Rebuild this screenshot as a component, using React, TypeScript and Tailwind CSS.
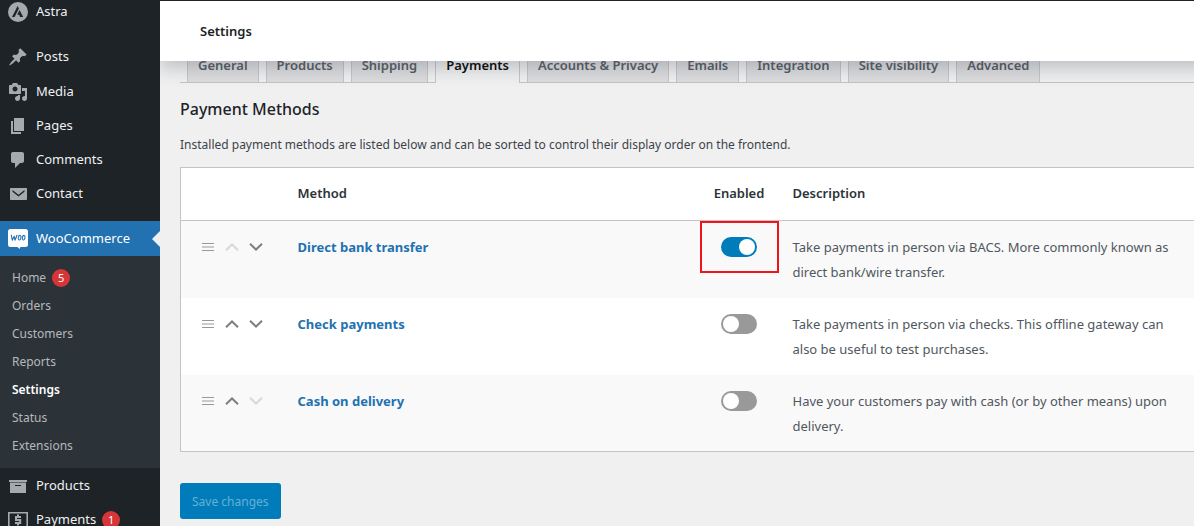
import { useState } from "react";
import type { ReactNode } from "react";

function Glyph({ d }: { d: string }) {
  return (
    <svg viewBox="0 0 20 20" className="size-5 shrink-0 fill-[#a7aaad]" aria-hidden="true">
      <path fillRule="evenodd" d={d} />
    </svg>
  );
}

const POST =
  "M10.44 3.02l1.82-1.82 6.36 6.35-1.83 1.82c-1.05-.68-2.48-.57-3.41.36l-.75.75c-.92.93-1.04 2.35-.35 3.41l-1.83 1.82-2.41-2.41-2.8 2.79c-.42.42-3.38 2.71-3.8 2.29s1.86-3.39 2.28-3.81l2.79-2.79L4.1 9.36l1.83-1.82c1.05.69 2.48.57 3.4-.36l.75-.75c.93-.92 1.05-2.35.36-3.41z";
const MEDIA =
  "M13 11V4c0-.55-.45-1-1-1h-1.67L9 1H5L3.67 3H2c-.55 0-1 .45-1 1v7c0 .55.45 1 1 1h10c.55 0 1-.45 1-1zM7 4.5c1.38 0 2.5 1.12 2.5 2.5S8.38 9.5 7 9.5 4.5 8.38 4.5 7 5.62 4.5 7 4.5zM14 6h5v10.5c0 1.38-1.12 2.5-2.5 2.5S14 17.88 14 16.5s1.12-2.5 2.5-2.5c.17 0 .34.02.5.05V9h-3V6zm-4 8.05V13h2v3.5c0 1.38-1.12 2.5-2.5 2.5S7 17.88 7 16.5 8.12 14 9.5 14c.17 0 .34.02.5.05z";
const PAGE = "M6 15V2h10v13H6zm-1 1h8v2H3V5h2v11z";
const COMMENT = "M5 2h9c1.1 0 2 .9 2 2v7c0 1.1-.9 2-2 2h-2l-5 5v-5H5c-1.1 0-2-.9-2-2V4c0-1.1.9-2 2-2z";
const MAIL =
  "M3 4h15c.6 0 1 .4 1 1v10c0 .6-.4 1-1 1H3c-.6 0-1-.4-1-1V5c0-.6.4-1 1-1zM4.500 6v1.800l6 4.700 6-4.700V6l-6 4.700z";
const ARCHIVE = "M19 4v2H1V4h18zM2 6.500h16V17H2zM7 9v1h6V9z";

function AstraIcon() {
  return (
    <svg viewBox="0 0 20 20" className="size-5 shrink-0" aria-hidden="true">
      <circle cx="10" cy="10" r="10" fill="#a7aaad" />
      <path d="M9.600 4L4 15h2.600l4.300-8.500zM11.500 8l-2.300 4.700h2l.8 2.300h3.200z" fill="#1d2327" />
    </svg>
  );
}

function WooIcon() {
  return (
    <svg viewBox="0 0 20 20" className="size-5 shrink-0" aria-hidden="true">
      <path d="M2.500 0h15A2.500 2.500 0 0 1 20 2.500v13a2.500 2.500 0 0 1-2.500 2.500h-5l-1 2-2-2h-7A2.500 2.500 0 0 1 0 15.500v-13A2.500 2.500 0 0 1 2.500 0z" fill="#fff" />
      <path d="M3.300 6.200l1 5L6.200 7.200l.8 4L9 6.200" fill="none" stroke="#2271b1" strokeWidth="1.100" strokeLinejoin="round" strokeLinecap="round" />
      <ellipse cx="11.600" cy="8.700" rx="1.300" ry="2.300" transform="rotate(14 11.600 8.700)" fill="none" stroke="#2271b1" strokeWidth="1.100" />
      <ellipse cx="15.600" cy="8.700" rx="1.300" ry="2.300" transform="rotate(14 15.600 8.700)" fill="none" stroke="#2271b1" strokeWidth="1.100" />
    </svg>
  );
}

function MoneyIcon() {
  return (
    <svg viewBox="0 0 20 20" className="size-5 shrink-0" fill="none" stroke="#a7aaad" aria-hidden="true">
      <path d="M.8 2.800h18.400v14.400H.8z" strokeWidth="1.600" />
      <path d="M13 7H8v3h4.200v3H7M10 4.500V7M10 13v2.500" strokeWidth="2" />
    </svg>
  );
}

function Badge({ children }: { children: ReactNode }) {
  return (
    <span className="flex size-[18px] items-center justify-center rounded-full bg-[#d63638] text-[11px] text-white">
      {children}
    </span>
  );
}

function MenuItem({ icon, label, badge, tall }: { icon: ReactNode; label: string; badge?: string; tall?: boolean }) {
  return (
    <li>
      <a href="#" className={`flex items-center px-2 text-[13px] text-[#f0f0f1] ${tall ? "h-9" : "h-[34px]"}`}>
        {icon}
        <span className="mr-1.5 ml-2">{label}</span>
        {badge && <Badge>{badge}</Badge>}
      </a>
    </li>
  );
}

const SUBMENU = ["Home", "Orders", "Customers", "Reports", "Settings", "Status", "Extensions"];

function Sidebar() {
  return (
    <nav className="w-40 shrink-0 overflow-hidden bg-[#1d2327]" aria-label="Main menu">
      <ul className="-mt-[5px]">
        <MenuItem icon={<AstraIcon />} label="Astra" />
      </ul>
      <ul className="py-2.5">
        <MenuItem icon={<Glyph d={POST} />} label="Posts" tall />
        <MenuItem icon={<Glyph d={MEDIA} />} label="Media" />
        <MenuItem icon={<Glyph d={PAGE} />} label="Pages" />
        <MenuItem icon={<Glyph d={COMMENT} />} label="Comments" />
        <MenuItem icon={<Glyph d={MAIL} />} label="Contact" />
      </ul>
      <a href="#" className="relative flex h-[35px] items-center gap-2 bg-[#2271b1] px-2 text-[13px] text-white">
        <WooIcon />
        WooCommerce
        <span className="absolute top-1/2 right-0 -translate-y-1/2 border-8 border-l-0 border-transparent border-r-[#f0f0f1]" />
      </a>
      <ul className="bg-[#2c3338] py-2">
        {SUBMENU.map((label) => (
          <li key={label}>
            <a
              href="#"
              className={`flex h-7 items-center gap-1.5 px-3 text-[12px] ${label === "Settings" ? "font-semibold text-white" : "text-[#b5b9bd]"}`}
            >
              {label}
              {label === "Home" && <Badge>5</Badge>}
            </a>
          </li>
        ))}
      </ul>
      <ul className="pt-px">
        <MenuItem icon={<Glyph d={ARCHIVE} />} label="Products" />
        <MenuItem icon={<MoneyIcon />} label="Payments" badge="1" />
      </ul>
    </nav>
  );
}

const TABS = ["General", "Products", "Shipping", "Payments", "Accounts & Privacy", "Emails", "Integration", "Site visibility", "Advanced"];

function Tabs() {
  return (
    <nav className="-mt-3.5 flex gap-[7px] border-b border-[#c3c4c7] pl-[7px]" aria-label="Settings sections">
      {TABS.map((tab) => (
        <a
          key={tab}
          href="#"
          className={`shrink-0 border border-b-0 border-[#c3c4c7] px-2.5 py-[5px] text-[13px] leading-6 font-semibold whitespace-nowrap ${
            tab === "Payments" ? "-mb-px bg-[#f0f0f1] text-black" : "bg-[#dcdcde] text-[#50575e]"
          }`}
        >
          {tab}
        </a>
      ))}
    </nav>
  );
}

function Chevron({ up, dim, label }: { up?: boolean; dim?: boolean; label: string }) {
  return (
    <button type="button" aria-label={label} disabled={dim} className={`flex size-6 items-center justify-center ${dim ? "text-[#d8d8d9]" : "text-[#7f7f83]"}`}>
      <svg viewBox="0 0 14 8" className="h-2 w-3.5" fill="none" stroke="currentColor" strokeWidth="2" aria-hidden="true">
        <path d={up ? "M1 7.200L7 1.500l6 5.700" : "M1 .8l6 5.700L13 .8"} />
      </svg>
    </button>
  );
}

const METHODS = [
  { name: "Direct bank transfer", on: true, lines: ["Take payments in person via BACS. More commonly known as", "direct bank/wire transfer."] },
  { name: "Check payments", on: false, lines: ["Take payments in person via checks. This offline gateway can", "also be useful to test purchases."] },
  { name: "Cash on delivery", on: false, lines: ["Have your customers pay with cash (or by other means) upon", "delivery."] },
];

function Toggle({ initial, label }: { initial: boolean; label: string }) {
  const [on, setOn] = useState(initial);
  return (
    <button
      type="button"
      role="switch"
      aria-checked={on}
      aria-label={label}
      onClick={() => setOn(!on)}
      className={`flex h-5 w-9 items-center rounded-full px-0.5 ${on ? "justify-end bg-[#007cba]" : "bg-[#999999]"}`}
    >
      <span className="size-4 rounded-full bg-white" />
    </button>
  );
}

function MethodsTable() {
  return (
    <table className="w-full table-fixed border-collapse border border-r-0 border-[#c3c4c7] bg-white text-left">
      <colgroup>
        <col className="w-[105px]" />
        <col className="w-[414px]" />
        <col className="w-[79px]" />
        <col />
      </colgroup>
      <thead>
        <tr className="h-[53px] border-b border-[#c3c4c7] text-[13px] text-[#2c3338]">
          <th aria-label="Sort" />
          <th className="px-3 font-semibold">Method</th>
          <th className="text-center font-semibold">Enabled</th>
          <th className="pl-3.5 font-semibold">Description</th>
        </tr>
      </thead>
      <tbody>
        {METHODS.map((m, i) => (
          <tr key={m.name} className="h-[77px] align-top text-[13px] leading-[25px] odd:bg-[#f9f9f9]">
            <td className="pt-3.5 pl-[21px]">
              <div className="flex h-6 items-center">
                <svg viewBox="0 0 12 8" className="mr-1.5 h-2 w-3" stroke="#999999" aria-hidden="true">
                  <path d="M0 .5h12M0 4h12M0 7.500h12" />
                </svg>
                <Chevron up dim={i === 0} label={`Move ${m.name} up`} />
                <Chevron dim={i === METHODS.length - 1} label={`Move ${m.name} down`} />
              </div>
            </td>
            <td className="px-3 pt-3.5">
              <a href="#" className="font-bold text-[#2271b1]">
                {m.name}
              </a>
            </td>
            <td className="relative">
              <div className="flex justify-center pt-4">
                <Toggle initial={m.on} label={`Enable ${m.name}`} />
              </div>
              {i === 0 && <span className="pointer-events-none absolute inset-x-0 top-0 h-[52px] border-2 border-[#f0141a]" />}
            </td>
            <td className="pt-3.5 pl-3.5 whitespace-nowrap text-[#50575e]">
              {m.lines[0]}
              <br />
              {m.lines[1]}
            </td>
          </tr>
        ))}
      </tbody>
    </table>
  );
}

export default function App() {
  return (
    <div className="flex h-screen overflow-hidden bg-[#f0f0f1] font-['Noto_Sans','Open_Sans',sans-serif]">
      <Sidebar />
      <main className="min-w-0 flex-1 overflow-hidden">
        <header className="relative z-10 -mr-5 flex h-[61px] items-center border-t border-[#1d2327] bg-white px-10 pt-0.5 shadow-[0_8px_16px_0_rgba(85,93,102,0.3)]">
          <h1 className="text-[13px] font-semibold text-[#1e1e1e]">Settings</h1>
        </header>
        <div className="pl-5">
          <Tabs />
          <h2 className="mt-3.5 text-[16px] leading-6 font-medium text-[#1d2327]">Payment Methods</h2>
          <p className="mt-3.5 mb-3 text-[12px] leading-5 text-[#3c434a]">
            Installed payment methods are listed below and can be sorted to control their display order on the frontend.
          </p>
          <MethodsTable />
          <button type="button" className="mt-[31px] h-9 rounded-[3px] bg-[#007cba] px-3 pt-0.5 text-[12px] text-[#66b0d6]">
            Save changes
          </button>
        </div>
      </main>
    </div>
  );
}
